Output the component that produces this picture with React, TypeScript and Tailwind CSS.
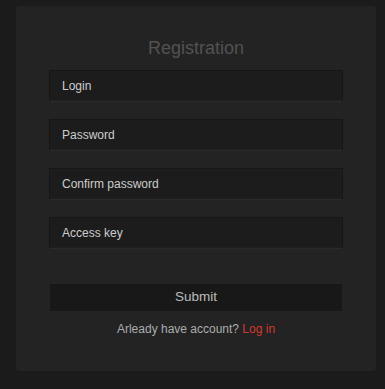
import React from "react";

const fields = ["Login", "Password", "Confirm password", "Access key"];

export default function App() {
  return (
    <div
      className="w-[385px] h-[389px] bg-[#1b1b1b] pt-[6px] pl-[16px]"
      style={{ fontFamily: '"Liberation Sans", Arial, sans-serif' }}
    >
      <div className="w-[360px] h-[365px] bg-[#232323] rounded-[3px] px-[33px] pt-[30px] flex flex-col">
        <div className="text-[18px] leading-[24px] text-[#525252] text-center">Registration</div>
        <div className="mt-[10px] flex flex-col gap-[17px]">
          {fields.map((f) => (
            <div
              key={f}
              className="h-[32px] bg-[#1c1c1c] border border-[#161616] border-b-[#2a2a2a] shadow-[inset_0_-1px_0_#1f1f1f] flex items-center pl-[12px] text-[12px] text-[#cdcdcd]"
            >
              {f}
            </div>
          ))}
        </div>
        <div className="mt-[35px] mx-[1px] h-[27px] bg-[#191818] flex items-center justify-center text-[13.5px] text-[#bcbcbc]">
          Submit
        </div>
        <div className="mt-[9px] text-center text-[12px] leading-[18px] text-[#acacac]">
          Arleady have account? <span className="text-[#d6372d]">Log in</span>
        </div>
      </div>
    </div>
  );
}
